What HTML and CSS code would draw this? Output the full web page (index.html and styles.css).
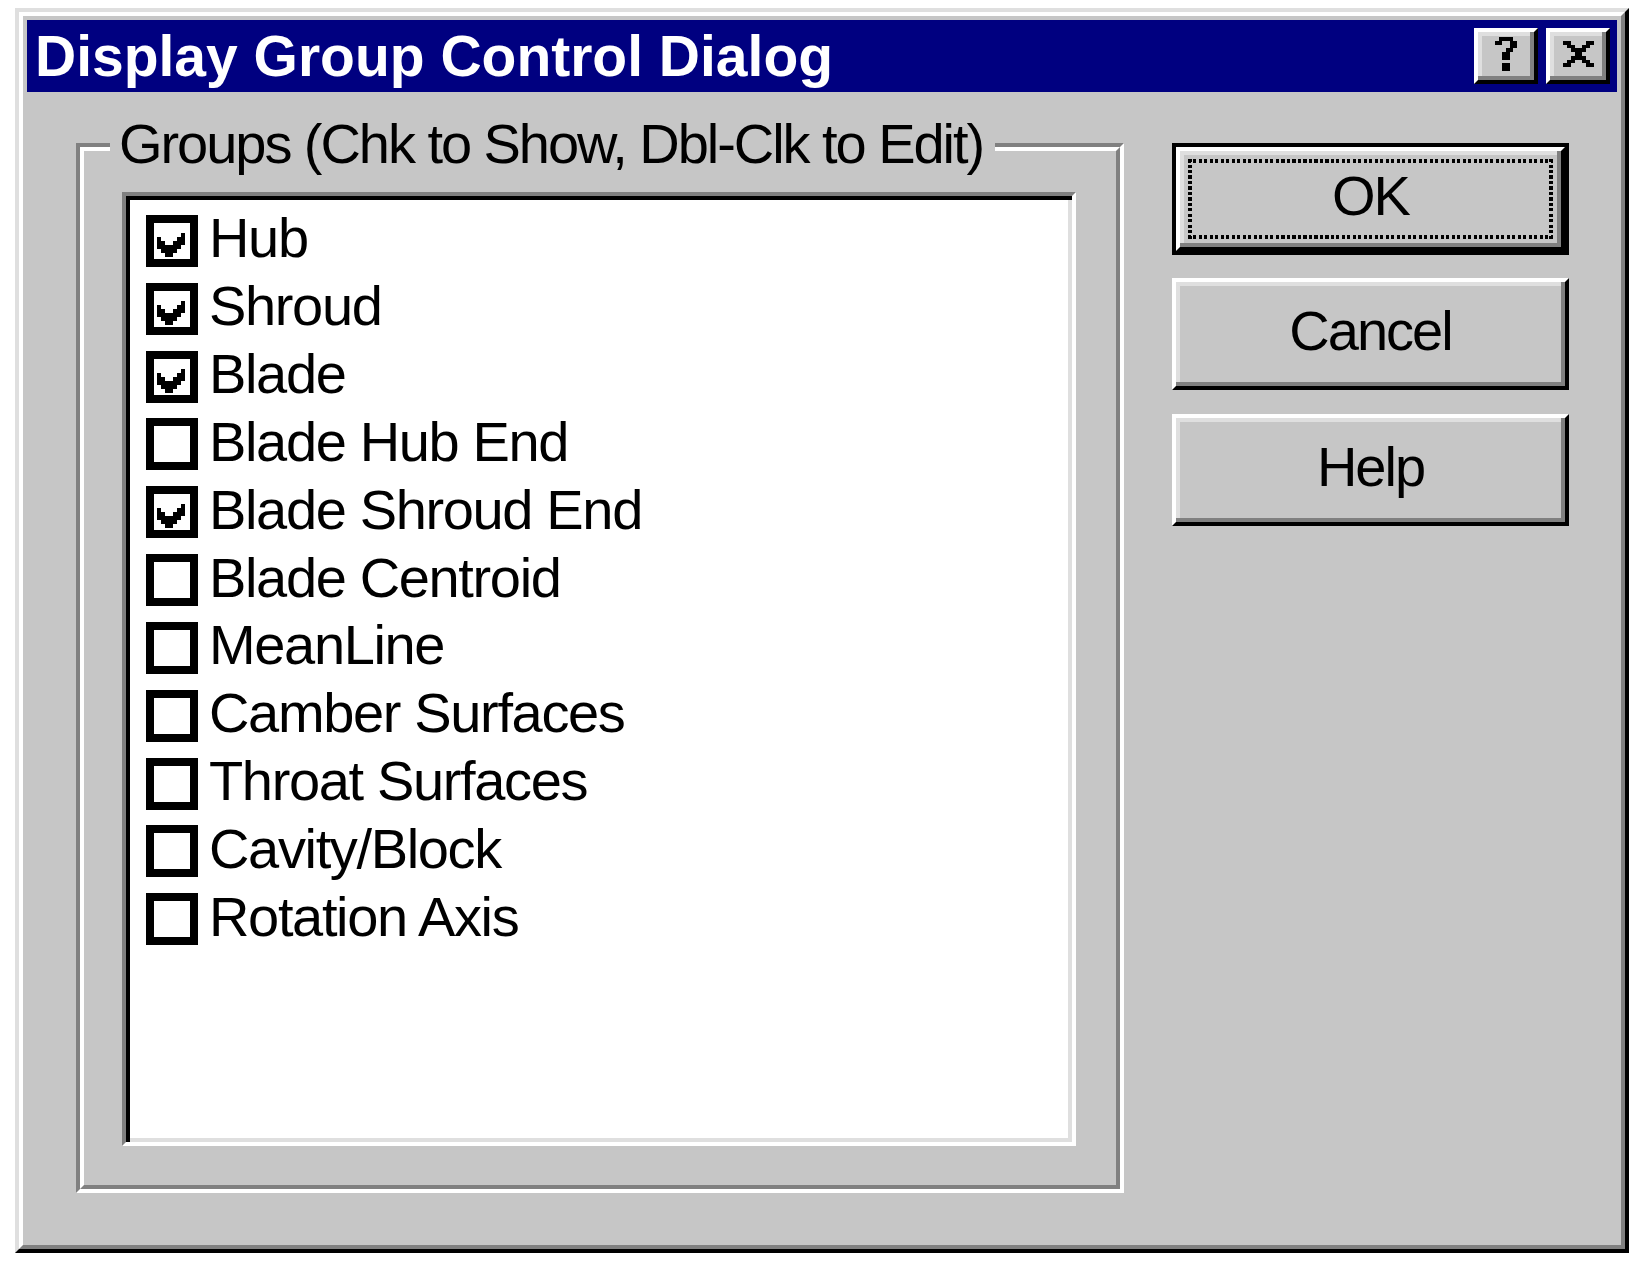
FILE: index.html
```html
<!DOCTYPE html>
<html>
<head>
<meta charset="utf-8">
<title>Display Group Control Dialog</title>
<link rel="stylesheet" href="styles.css">
</head>
<body>
<div class="dialog">
  <div class="dialog-inner">
    <div class="titlebar">
      <span class="title">Display Group Control Dialog</span>
      <div class="title-buttons">
        <div class="tbtn">
          <svg class="glyph-help" viewBox="0 0 6 9" preserveAspectRatio="none" shape-rendering="crispEdges"><path d="M1 0h4v1h-4z M0 1h2v1h-2z M4 1h2v1h-2z M4 2h2v1h-2z M3 3h2v1h-2z M2 4h2v2h-2z M2 7h2v2h-2z" fill="#000"/></svg>
        </div>
        <div class="tbtn">
          <svg class="glyph-close" viewBox="0 0 8 7" preserveAspectRatio="none" shape-rendering="crispEdges"><path d="M0 0h2v1h-2z M6 0h2v1h-2z M1 1h2v1h-2z M5 1h2v1h-2z M2 2h4v1h-4z M3 3h2v1h-2z M2 4h4v1h-4z M1 5h2v1h-2z M5 5h2v1h-2z M0 6h2v1h-2z M6 6h2v1h-2z" fill="#000"/></svg>
        </div>
      </div>
    </div>
    <div class="body">
      <div class="group">
        <span class="legend">Groups (Chk to Show, Dbl-Clk to Edit)</span>
        <div class="group-inner">
          <div class="list">
            <div class="row"><span class="cb"><svg class="check" viewBox="0 0 7 6" preserveAspectRatio="none" shape-rendering="crispEdges"><path d="M6 0h1v1h-1z M0 1h1v1h-1z M5 1h2v1h-2z M0 2h2v1h-2z M4 2h3v1h-3z M0 3h6v1h-6z M1 4h4v1h-4z M2 5h2v1h-2z" fill="#000"/></svg></span><span class="label">Hub</span></div>
            <div class="row"><span class="cb"><svg class="check" viewBox="0 0 7 6" preserveAspectRatio="none" shape-rendering="crispEdges"><path d="M6 0h1v1h-1z M0 1h1v1h-1z M5 1h2v1h-2z M0 2h2v1h-2z M4 2h3v1h-3z M0 3h6v1h-6z M1 4h4v1h-4z M2 5h2v1h-2z" fill="#000"/></svg></span><span class="label">Shroud</span></div>
            <div class="row"><span class="cb"><svg class="check" viewBox="0 0 7 6" preserveAspectRatio="none" shape-rendering="crispEdges"><path d="M6 0h1v1h-1z M0 1h1v1h-1z M5 1h2v1h-2z M0 2h2v1h-2z M4 2h3v1h-3z M0 3h6v1h-6z M1 4h4v1h-4z M2 5h2v1h-2z" fill="#000"/></svg></span><span class="label">Blade</span></div>
            <div class="row"><span class="cb"></span><span class="label">Blade Hub End</span></div>
            <div class="row"><span class="cb"><svg class="check" viewBox="0 0 7 6" preserveAspectRatio="none" shape-rendering="crispEdges"><path d="M6 0h1v1h-1z M0 1h1v1h-1z M5 1h2v1h-2z M0 2h2v1h-2z M4 2h3v1h-3z M0 3h6v1h-6z M1 4h4v1h-4z M2 5h2v1h-2z" fill="#000"/></svg></span><span class="label">Blade Shroud End</span></div>
            <div class="row"><span class="cb"></span><span class="label">Blade Centroid</span></div>
            <div class="row"><span class="cb"></span><span class="label">MeanLine</span></div>
            <div class="row"><span class="cb"></span><span class="label">Camber Surfaces</span></div>
            <div class="row"><span class="cb"></span><span class="label">Throat Surfaces</span></div>
            <div class="row"><span class="cb"></span><span class="label">Cavity/Block</span></div>
            <div class="row"><span class="cb"></span><span class="label">Rotation Axis</span></div>
          </div>
        </div>
      </div>
      <div class="buttons">
        <div class="btn-frame">
          <div class="btn btn-ok"><span class="focus"></span><span class="btn-text">OK</span></div>
        </div>
        <div class="btn btn-cancel"><span class="btn-text">Cancel</span></div>
        <div class="btn btn-help"><span class="btn-text">Help</span></div>
      </div>
    </div>
  </div>
</div>
</body>
</html>
```
FILE: styles.css
```css
html, body {
  margin: 0;
  padding: 0;
  background: #ffffff;
}

body {
  font-family: "Liberation Sans", Arial, sans-serif;
  color: #000;
}

.dialog {
  margin: 8px 0 0 15px;
  width: 1614px;
  height: 1245px;
  box-sizing: border-box;
  border: 4px solid;
  border-color: #dfdfdf #000000 #000000 #dfdfdf;
  background: #c6c6c6;
  display: flex;
  flex-direction: column;
}

.dialog-inner {
  flex: 1;
  box-sizing: border-box;
  border: 4px solid;
  border-color: #ffffff #808080 #808080 #ffffff;
  padding: 4px;
  display: flex;
  flex-direction: column;
}

.titlebar {
  height: 72px;
  flex: none;
  background: #000080;
  display: flex;
  align-items: center;
  padding-left: 8px;
}

.title {
  color: #ffffff;
  font-weight: bold;
  font-size: 57px;
  line-height: 72px;
  white-space: nowrap;
}

.title-buttons {
  margin-left: auto;
  display: flex;
  gap: 8px;
  padding-right: 7px;
}

.tbtn {
  width: 64px;
  height: 56px;
  box-sizing: border-box;
  border: 4px solid;
  border-color: #ffffff #000000 #000000 #ffffff;
  box-shadow: inset -4px -4px #808080, inset 4px 4px #dfdfdf;
  background: #c6c6c6;
  display: flex;
  align-items: center;
  justify-content: center;
  padding-bottom: 4px;
}

.glyph-help {
  width: 22px;
  height: 34px;
  display: block;
}

.glyph-close {
  width: 31px;
  height: 26px;
  display: block;
}

.body {
  flex: 1;
  display: flex;
  gap: 48px;
  padding: 51px 48px 48px 49px;
}

.group {
  width: 1048px;
  height: 1050px;
  flex: none;
  box-sizing: border-box;
  border: 4px solid;
  border-color: #808080 #ffffff #ffffff #808080;
  position: relative;
}

.group-inner {
  height: 100%;
  box-sizing: border-box;
  border: 4px solid;
  border-color: #ffffff #808080 #808080 #ffffff;
  padding: 41px 40px 39px 38px;
}

.legend {
  position: absolute;
  top: -35px;
  left: 30px;
  padding: 0 12px 0 9px;
  background: #c6c6c6;
  font-size: 56px;
  line-height: 64px;
  letter-spacing: -2.05px;
  white-space: nowrap;
}

.list {
  height: 100%;
  box-sizing: border-box;
  border: 4px solid;
  border-color: #808080 #ffffff #ffffff #808080;
  box-shadow: inset 4px 4px #000000, inset -4px -4px #dfdfdf;
  background: #ffffff;
  padding: 11px 0 0 20px;
}

.row {
  height: 67.84px;
  display: flex;
  align-items: center;
}

.cb {
  width: 52px;
  height: 52px;
  box-sizing: border-box;
  border: 8px solid #000000;
  background: #ffffff;
  flex: none;
}

.check {
  display: block;
  width: 28px;
  height: 24px;
  margin: 10px 0 0 3px;
}

.label {
  margin-left: 11px;
  margin-bottom: 5px;
  font-size: 56px;
  line-height: 52px;
  letter-spacing: -1.35px;
  white-space: nowrap;
}

.buttons {
  width: 397px;
  flex: none;
  display: flex;
  flex-direction: column;
}

.btn-frame {
  height: 112px;
  box-sizing: border-box;
  border: 4px solid #000000;
  display: flex;
}

.btn {
  box-sizing: border-box;
  height: 112px;
  border: 4px solid;
  border-color: #ffffff #000000 #000000 #ffffff;
  box-shadow: inset -4px -4px #808080, inset 4px 4px #dfdfdf;
  background: #c6c6c6;
  display: flex;
  align-items: center;
  justify-content: center;
  padding-bottom: 7px;
  position: relative;
}

.btn-ok {
  flex: 1;
  height: auto;
}

.btn-cancel {
  margin-top: 23px;
}

.btn-help {
  margin-top: 24px;
}

.btn-text {
  font-size: 56px;
  line-height: 64px;
  letter-spacing: -2px;
  white-space: nowrap;
}

.focus {
  position: absolute;
  left: 8px;
  right: 8px;
  top: 8px;
  bottom: 8px;
  background:
    repeating-linear-gradient(90deg, #000 0 3px, transparent 3px 5.5px) top left / 100% 4px no-repeat,
    repeating-linear-gradient(90deg, #000 0 3px, transparent 3px 5.5px) bottom left / 100% 4px no-repeat,
    repeating-linear-gradient(180deg, #000 0 3px, transparent 3px 5.5px) top left / 4px 100% no-repeat,
    repeating-linear-gradient(180deg, #000 0 3px, transparent 3px 5.5px) top right / 4px 100% no-repeat;
}
```
